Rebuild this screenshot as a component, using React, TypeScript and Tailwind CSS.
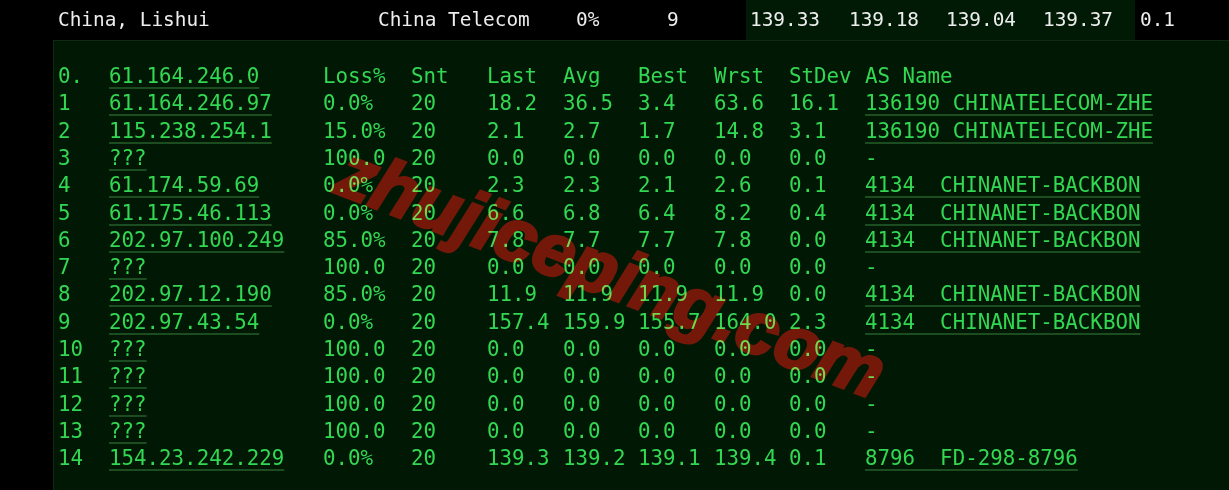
import React from 'react';

type Hop = {
  n: string;
  host: string;
  loss: string;
  snt: string;
  last: string;
  avg: string;
  best: string;
  wrst: string;
  stdev: string;
  as: string;
};

const hops: Hop[] = [
  { n: '1', host: '61.164.246.97', loss: '0.0%', snt: '20', last: '18.2', avg: '36.5', best: '3.4', wrst: '63.6', stdev: '16.1', as: '136190 CHINATELECOM-ZHE' },
  { n: '2', host: '115.238.254.1', loss: '15.0%', snt: '20', last: '2.1', avg: '2.7', best: '1.7', wrst: '14.8', stdev: '3.1', as: '136190 CHINATELECOM-ZHE' },
  { n: '3', host: '???', loss: '100.0', snt: '20', last: '0.0', avg: '0.0', best: '0.0', wrst: '0.0', stdev: '0.0', as: '-' },
  { n: '4', host: '61.174.59.69', loss: '0.0%', snt: '20', last: '2.3', avg: '2.3', best: '2.1', wrst: '2.6', stdev: '0.1', as: '4134  CHINANET-BACKBON' },
  { n: '5', host: '61.175.46.113', loss: '0.0%', snt: '20', last: '6.6', avg: '6.8', best: '6.4', wrst: '8.2', stdev: '0.4', as: '4134  CHINANET-BACKBON' },
  { n: '6', host: '202.97.100.249', loss: '85.0%', snt: '20', last: '7.8', avg: '7.7', best: '7.7', wrst: '7.8', stdev: '0.0', as: '4134  CHINANET-BACKBON' },
  { n: '7', host: '???', loss: '100.0', snt: '20', last: '0.0', avg: '0.0', best: '0.0', wrst: '0.0', stdev: '0.0', as: '-' },
  { n: '8', host: '202.97.12.190', loss: '85.0%', snt: '20', last: '11.9', avg: '11.9', best: '11.9', wrst: '11.9', stdev: '0.0', as: '4134  CHINANET-BACKBON' },
  { n: '9', host: '202.97.43.54', loss: '0.0%', snt: '20', last: '157.4', avg: '159.9', best: '155.7', wrst: '164.0', stdev: '2.3', as: '4134  CHINANET-BACKBON' },
  { n: '10', host: '???', loss: '100.0', snt: '20', last: '0.0', avg: '0.0', best: '0.0', wrst: '0.0', stdev: '0.0', as: '-' },
  { n: '11', host: '???', loss: '100.0', snt: '20', last: '0.0', avg: '0.0', best: '0.0', wrst: '0.0', stdev: '0.0', as: '-' },
  { n: '12', host: '???', loss: '100.0', snt: '20', last: '0.0', avg: '0.0', best: '0.0', wrst: '0.0', stdev: '0.0', as: '-' },
  { n: '13', host: '???', loss: '100.0', snt: '20', last: '0.0', avg: '0.0', best: '0.0', wrst: '0.0', stdev: '0.0', as: '-' },
  { n: '14', host: '154.23.242.229', loss: '0.0%', snt: '20', last: '139.3', avg: '139.2', best: '139.1', wrst: '139.4', stdev: '0.1', as: '8796  FD-298-8796' },
];

const link = 'underline decoration-[#1b4d20] decoration-2 underline-offset-[4px]';

const Row: React.FC<{ hop: Hop; header?: boolean }> = ({ hop, header }) => (
  <div className="flex h-[27.3px] items-center whitespace-pre">
    <span className="w-[51px] shrink-0">{hop.n}</span>
    <span className="w-[214px] shrink-0">
      <span className={link}>{hop.host}</span>
    </span>
    <span className="w-[88px] shrink-0">{hop.loss}</span>
    <span className="w-[76px] shrink-0">{hop.snt}</span>
    <span className="w-[76px] shrink-0">{hop.last}</span>
    <span className="w-[75px] shrink-0">{hop.avg}</span>
    <span className="w-[76px] shrink-0">{hop.best}</span>
    <span className="w-[75px] shrink-0">{hop.wrst}</span>
    <span className="w-[76px] shrink-0">{hop.stdev}</span>
    <span>
      {header || hop.as === '-' ? hop.as : <span className={link}>{hop.as}</span>}
    </span>
  </div>
);

export default function App() {
  return (
    <div
      className="relative w-[1229px] h-[490px] overflow-hidden bg-black"
      style={{ fontFamily: '"DejaVu Sans Mono", "Liberation Mono", monospace' }}
    >
      {/* summary line */}
      <div className="flex h-[40px] items-stretch whitespace-pre pl-[58px] text-[19.4px] text-[#ededed]">
        <span className="w-[320px] self-center">China, Lishui</span>
        <span className="w-[198px] self-center">China Telecom</span>
        <span className="w-[91px] self-center">0%</span>
        <span className="w-[79px] self-center">9</span>
        <div className="flex w-[389px] items-center bg-[#011a05] pl-[4px]">
          <span className="w-[99px]">139.33</span>
          <span className="w-[97px]">139.18</span>
          <span className="w-[97px]">139.04</span>
          <span>139.37</span>
        </div>
        <span className="self-center pl-[5px]">0.1</span>
      </div>

      {/* mtr report */}
      <div className="ml-[53px] h-[450px] border-l border-t border-[#0e2b11] bg-[#011805] pl-[4px] pt-[22px] text-[20.8px] text-[#33d852]">
        <Row
          header
          hop={{ n: '0.', host: '61.164.246.0', loss: 'Loss%', snt: 'Snt', last: 'Last', avg: 'Avg', best: 'Best', wrst: 'Wrst', stdev: 'StDev', as: 'AS Name' }}
        />
        {hops.map((h) => (
          <Row key={h.n} hop={h} />
        ))}
      </div>

      {/* watermark */}
      <div
        className="pointer-events-none absolute left-[611px] top-[272px] -translate-x-1/2 -translate-y-1/2 rotate-[21deg] whitespace-nowrap text-[74px] font-bold italic leading-none text-[#74160a] mix-blend-lighten [-webkit-text-stroke:3px_#74160a]"
        style={{ fontFamily: '"Liberation Sans", Arial, sans-serif' }}
      >
        zhujiceping.com
      </div>
    </div>
  );
}
